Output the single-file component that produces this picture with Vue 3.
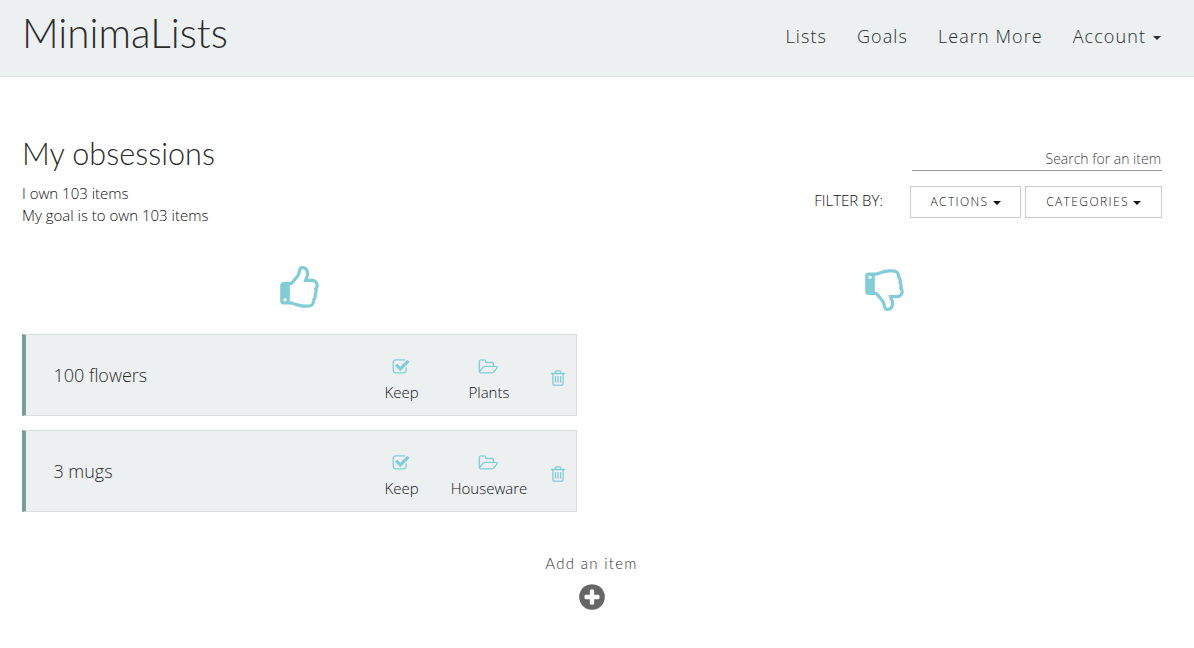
<script setup>
const nav = ['Lists', 'Goals', 'Learn More']
const items = [
  { name: '100 flowers', action: 'Keep', category: 'Plants' },
  { name: '3 mugs', action: 'Keep', category: 'Houseware' },
]
const thumb = 'M384 1344q0-26-19-45t-45-19-45 19-19 45 19 45 45 19 45-19 19-45zm1152-576q0-51-39-89.5t-89-38.5h-352q0-58 48-159.5t48-160.5q0-98-32-145t-128-47q-26 26-38 85t-30.5 125.5-59.5 109.5q-22 23-77 91-4 5-23 30t-31.5 41-34.5 42.5-40 44-38.5 35.5-40 27-35.5 9h-32v640h32q13 0 31.5 3t33 6.5 38 11 35 11.5 35.5 12.5 29 10.5q211 73 342 73h121q192 0 192-167 0-26-5-56 30-16 47.5-52.5t17.5-73.5-18-69q53-50 53-119 0-25-10-55.5t-25-47.5q32-1 53.5-47t21.5-81zm128-1q0 89-49 163 9 33 9 69 0 77-38 144 3 21 3 43 0 101-60 178 1 139-85 219.5t-227 80.5h-129q-96 0-189.5-22.5t-216.5-65.5q-116-40-138-40h-288q-53 0-90.5-37.5t-37.5-90.5v-640q0-53 37.5-90.5t90.5-37.5h274q36-24 137-155 58-75 107-128 24-25 35.5-85.5t30.5-126.5 62-108q39-37 90-37 84 0 151 32.5t102 101.5 35 186q0 93-48 192h176q104 0 180 76t76 179z'
const check = 'M1472 930v318q0 119-84.5 203.5t-203.5 84.5h-832q-119 0-203.5-84.5t-84.5-203.5v-832q0-119 84.5-203.5t203.5-84.5h832q63 0 117 25 15 7 18 23 3 17-9 29l-49 49q-10 10-23 10-3 0-9-2-23-6-45-6h-832q-66 0-113 47t-47 113v832q0 66 47 113t113 47h832q66 0 113-47t47-113v-254q0-13 9-22l64-64q10-10 23-10 6 0 12 3 20 8 20 29zm231-489l-814 814q-24 24-57 24t-57-24l-430-430q-24-24-24-57t24-57l110-110q24-24 57-24t57 24l263 263 647-647q24-24 57-24t57 24l110 110q24 24 24 57t-24 57z'
const folder = 'M1845 931q0-35-53-35h-1088q-40 0-85.5 21.5t-71.5 52.5l-294 363q-18 24-18 40 0 35 53 35h1088q40 0 86-22t71-53l294-363q18-22 18-39zm-1141-163h768v-160q0-40-28-68t-68-28h-576q-40 0-68-28t-28-68v-64q0-40-28-68t-68-28h-320q-40 0-68 28t-28 68v853l256-315q44-53 116-87.5t140-34.5zm1269 163q0 62-46 120l-295 363q-43 53-116 87.5t-140 34.5h-1088q-92 0-158-66t-66-158v-960q0-92 66-158t158-66h320q92 0 158 66t66 158v32h544q92 0 158 66t66 158v160h192q54 0 99 24.5t67 70.5q15 32 15 68z'
const trash = 'M704 736v576q0 14-9 23t-23 9h-64q-14 0-23-9t-9-23v-576q0-14 9-23t23-9h64q14 0 23 9t9 23zm256 0v576q0 14-9 23t-23 9h-64q-14 0-23-9t-9-23v-576q0-14 9-23t23-9h64q14 0 23 9t9 23zm256 0v576q0 14-9 23t-23 9h-64q-14 0-23-9t-9-23v-576q0-14 9-23t23-9h64q14 0 23 9t9 23zm128 724v-948h-896v948q0 22 7 40.5t14.5 27 10.5 8.5h832q3 0 10.5-8.5t14.5-27 7-40.5zm-672-1076h448l-48-117q-7-9-17-11h-317q-10 2-17 11zm928 32v64q0 14-9 23t-23 9h-96v948q0 83-47 143.5t-113 60.5h-832q-66 0-113-58.5t-47-141.5v-952h-96q-14 0-23-9t-9-23v-64q0-14 9-23t23-9h309l70-167q15-37 54-63t79-26h320q40 0 79 26t54 63l70 167h309q14 0 23 9t9 23z'
const plus = 'M1344 960v-128q0-26-19-45t-45-19h-256v-256q0-26-19-45t-45-19h-128q-26 0-45 19t-19 45v256h-256q-26 0-45 19t-19 45v128q0 26 19 45t45 19h256v256q0 26 19 45t45 19h128q26 0 45-19t19-45v-256h256q26 0 45-19t19-45zm320-64q0 209-103 385.5t-279.5 279.5-385.5 103-385.5-103-279.5-279.5-103-385.5 103-385.5 279.5-279.5 385.5-103 385.5 103 279.5 279.5 103 385.5z'
</script>

<template>
  <div class="page">
    <header class="navbar">
      <a class="brand">MinimaLists</a>
      <nav class="links">
        <a v-for="n in nav" :key="n">{{ n }}</a>
        <a class="account">Account<i class="caret"></i></a>
      </nav>
    </header>

    <section class="top">
      <div class="summary">
        <h1>My obsessions</h1>
        <p>I own 103 items</p>
        <p>My goal is to own 103 items</p>
      </div>
      <div class="tools">
        <input class="search" type="text" placeholder="Search for an item" />
        <div class="filters">
          <span class="label">FILTER BY:</span>
          <button class="actions">ACTIONS<i class="caret"></i></button>
          <button class="categories">CATEGORIES<i class="caret"></i></button>
        </div>
      </div>
    </section>

    <main class="columns">
      <section>
        <svg class="thumb" viewBox="0 0 1792 1792"><path :d="thumb" /></svg>
        <article v-for="item in items" :key="item.name" class="card">
          <h2>{{ item.name }}</h2>
          <div class="cell">
            <svg class="icon" viewBox="0 0 1792 1792"><path :d="check" /></svg>
            <span>{{ item.action }}</span>
          </div>
          <div class="cell">
            <svg class="icon folder" viewBox="0 0 2048 1792"><path :d="folder" /></svg>
            <span>{{ item.category }}</span>
          </div>
          <svg class="icon trash" viewBox="0 0 1792 1792"><path :d="trash" /></svg>
        </article>
      </section>
      <section>
        <svg class="thumb down" viewBox="0 0 1792 1792"><path :d="thumb" /></svg>
      </section>
    </main>

    <footer class="add">
      <span>Add an item</span>
      <svg viewBox="0 0 1792 1792"><path :d="plus" /></svg>
    </footer>
  </div>
</template>

<style>
body {
  margin: 0;
  background: #fff;
}
</style>

<style scoped>
.page {
  width: 1194px;
  height: 648px;
  overflow: hidden;
  font-family: "Open Sans", sans-serif;
  font-weight: 300;
  font-size: 15px;
  line-height: 22px;
  color: #111;
}
svg {
  display: block;
  fill: #82cdd5;
}
h1, h2, p {
  margin: 0;
  font-weight: 300;
}
.navbar {
  box-sizing: border-box;
  height: 77px;
  padding: 0 33px 0 22px;
  display: flex;
  justify-content: space-between;
  background: #ecf0f1;
  border-bottom: 1px solid #e2e5e5;
  color: #2b2b2b;
}
.brand {
  font: 300 40.4px/66px Lato, sans-serif;
}
.links {
  display: flex;
  gap: 30px;
  font-size: 18px;
  line-height: 73px;
  letter-spacing: 1.08px;
}
.caret {
  display: inline-block;
  border: 4px solid transparent;
  border-top-color: currentColor;
  border-bottom: 0;
}
.account .caret {
  margin-left: 7px;
  vertical-align: 3px;
}
.top {
  height: 185px;
  padding: 0 32px 0 22px;
  display: flex;
  justify-content: space-between;
}
.summary {
  padding-top: 57px;
}
h1 {
  font: 300 30.6px/40px Lato, sans-serif;
  color: #2b2b2b;
  margin-bottom: 8px;
}
.tools {
  display: flex;
  flex-direction: column;
  align-items: flex-end;
  padding-top: 70px;
}
.search {
  box-sizing: border-box;
  width: 250px;
  height: 24px;
  border: 0;
  border-bottom: 1px solid #999;
  padding: 0 1px 0 0;
  background: none;
  text-align: right;
  font: 300 14px/20px "Open Sans", sans-serif;
}
.search::placeholder {
  color: #444;
  opacity: 1;
}
.filters {
  display: flex;
  margin-top: 15px;
}
.label {
  line-height: 28px;
  font-size: 15px;
  margin-right: 27px;
}
button {
  box-sizing: border-box;
  height: 32px;
  padding: 0 0 1px;
  display: flex;
  align-items: center;
  justify-content: center;
  border: 1px solid #ccc;
  background: #fff;
  color: #111;
  font: 300 12px/20px "Open Sans", sans-serif;
  letter-spacing: 1.4px;
}
button .caret {
  margin: 3px 0 0 4px;
}
.actions {
  width: 111px;
  margin-right: 4px;
}
.categories {
  width: 137px;
}
.columns {
  display: grid;
  grid-template-columns: 555px 555px;
  gap: 30px;
  padding: 0 22px;
  height: 290px;
}
.thumb {
  width: 45px;
  height: 45px;
  margin: 4px 0 23px 254.5px;
}
.down {
  transform: scaleY(-1);
}
.card {
  box-sizing: border-box;
  height: 82px;
  margin-bottom: 14px;
  border: 1px solid #d9dcdc;
  border-left: 4px solid #789f94;
  background: #ecf0f1;
  display: grid;
  grid-template-columns: 332px 87px 88px 1fr;
}
h2 {
  font-size: 18px;
  line-height: 81px;
  padding-left: 27.4px;
  color: #2b2b2b;
}
.cell {
  display: flex;
  flex-direction: column;
  align-items: center;
  padding-top: 23px;
}
.cell span {
  margin-top: 5px;
}
.icon {
  width: 18px;
  height: 18px;
  margin-right: 1px;
}
.folder {
  width: 20.57px;
}
.trash {
  margin: 34px 0 0 16px;
}
.add {
  width: 1183px;
  display: flex;
  flex-direction: column;
  align-items: center;
  color: #333;
  font: 300 15px/22px Lato, sans-serif;
  letter-spacing: 1.3px;
}
.add svg {
  width: 30px;
  height: 30px;
  margin-top: 8px;
  fill: #666;
}
</style>
